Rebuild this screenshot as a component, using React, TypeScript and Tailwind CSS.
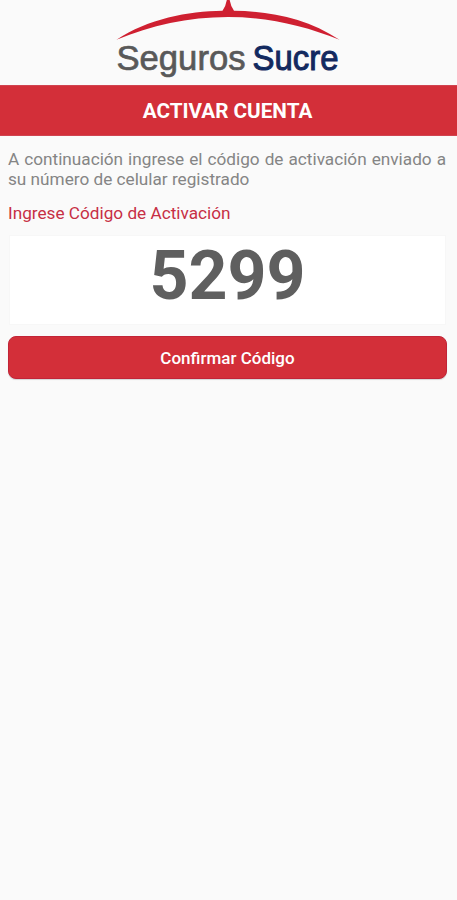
function Logo() {
  return (
    <svg className="block h-[85px] w-[241px]" viewBox="108 0 241 85" role="img" aria-label="Seguros Sucre">
      {/* Roof arc and spire */}
      <path
        d="M116.5 39.8 C148 19 188 11 222.5 10.8 Q226 6 227 -1 H229.5 Q230.5 6 234 10.8 C268 11 307 18 339.5 39.8 C304 25.5 267 17 228 17 C188 17 151 25.5 116.5 39.8 Z"
        fill="#cf2031"
      />
      <g fontFamily="'Liberation Sans', Arial, sans-serif" fontSize="35">
        <text x="116.5" y="70" textLength="129" lengthAdjust="spacingAndGlyphs" fill="#595959" stroke="#595959" strokeWidth="0.7">
          Seguros
        </text>
        <text x="252.5" y="70" textLength="86" lengthAdjust="spacingAndGlyphs" fill="#12295f" stroke="#12295f" strokeWidth="1">
          Sucre
        </text>
      </g>
    </svg>
  );
}

export default function App() {
  return (
    <div className="min-h-[900px] w-full bg-[#fafafa] font-[Roboto,sans-serif]">
      <header>
        <div className="flex h-[85px] pl-[108px]">
          <Logo />
        </div>
        <div className="flex h-[51px] items-center justify-center border-y border-[#d04450] bg-[#d32f39] pr-[2px]">
          <h1 className="pt-[3px] text-[20.7px] font-bold text-white">ACTIVAR CUENTA</h1>
        </div>
      </header>

      <main className="flex flex-col pl-2 pr-[11px] pt-[13px]">
        <p className="text-justify text-[17.2px] leading-5 text-[#858585]">
          A continuación ingrese el código de activación enviado a su número de celular registrado
        </p>
        <label htmlFor="code" className="mt-[14px] text-[17.2px] leading-5 text-[#c72f45]">
          Ingrese Código de Activación
        </label>
        <input
          id="code"
          type="text"
          inputMode="numeric"
          defaultValue="5299"
          className="ml-px mt-3 h-[90px] w-[437px] border border-[#f7f7f7] bg-white pb-[8px] text-center text-[68px] font-bold text-[#5f5f5f] outline-none"
        />
        <button
          type="button"
          className="mt-[11px] h-[43px] w-[439px] rounded-lg border border-[#c22438] bg-[#d32f39] pt-[3px] text-[17px] font-medium text-white shadow-[0_1px_1px_rgba(0,0,0,0.15)]"
        >
          Confirmar Código
        </button>
      </main>
    </div>
  );
}
